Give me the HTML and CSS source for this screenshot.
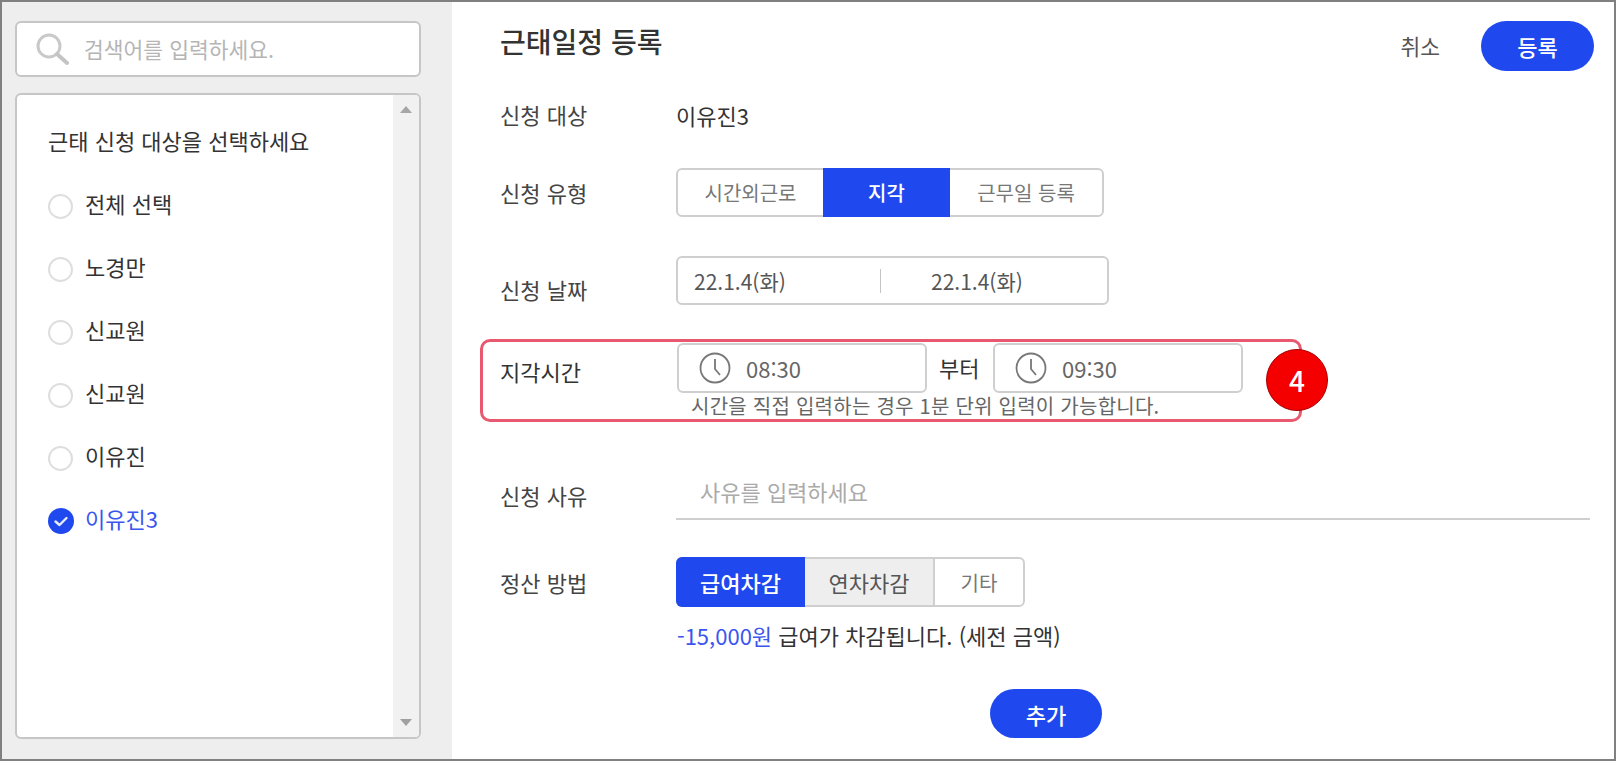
FILE: index.html
```html
<!DOCTYPE html>
<html lang="ko">
<head>
<meta charset="utf-8">
<title>근태일정 등록</title>
<link rel="stylesheet" href="styles.css">
</head>
<body>
<div class="app">
  <aside class="side">
    <div class="search">
      <svg class="search-icon" width="34" height="34" viewBox="0 0 34 34"><circle cx="14" cy="14" r="11" fill="none" stroke="#c9c9c9" stroke-width="3"/><path d="M22 22L32 31" stroke="#c4c4c4" stroke-width="4" stroke-linecap="round"/></svg>
      <span class="placeholder">검색어를 입력하세요.</span>
    </div>
    <div class="list-box">
      <div class="list">
        <div class="list-title">근태 신청 대상을 선택하세요</div>
        <div class="item"><span class="radio"></span><span>전체 선택</span></div>
        <div class="item"><span class="radio"></span><span>노경만</span></div>
        <div class="item"><span class="radio"></span><span>신교원</span></div>
        <div class="item"><span class="radio"></span><span>신교원</span></div>
        <div class="item"><span class="radio"></span><span>이유진</span></div>
        <div class="item selected">
          <svg class="check" width="26" height="26" viewBox="0 0 26 26"><circle cx="13" cy="13" r="13" fill="#1f49ee"/><path d="M7.5 13.5L11.5 17L18.5 10" fill="none" stroke="#e8ecff" stroke-width="2.4" stroke-linecap="round" stroke-linejoin="round"/></svg>
          <span>이유진3</span>
        </div>
      </div>
      <div class="scrollbar"><span class="arrow up"></span><span class="arrow down"></span></div>
    </div>
  </aside>
  <main class="main">
    <header class="head">
      <h1 class="title">근태일정 등록</h1>
      <div class="actions">
        <span class="cancel">취소</span>
        <button class="pill">등록</button>
      </div>
    </header>
    <div class="row row-target"><div class="label">신청 대상</div><div class="value">이유진3</div></div>
    <div class="row row-type">
      <div class="label">신청 유형</div>
      <div class="seg">
        <span class="seg-item w-a">시간외근로</span>
        <span class="seg-item on w-b">지각</span>
        <span class="seg-item w-c">근무일 등록</span>
      </div>
    </div>
    <div class="row row-date">
      <div class="label label-low">신청 날짜</div>
      <div class="date">
        <span class="date-a">22.1.4(화)</span>
        <span class="date-sep"></span>
        <span class="date-b">22.1.4(화)</span>
      </div>
    </div>
    <section class="late">
      <div class="late-row">
        <div class="label late-label">지각시간</div>
        <div class="time">
          <svg width="32" height="32" viewBox="0 0 32 32"><circle cx="16" cy="16" r="14.5" fill="none" stroke="#777" stroke-width="1.8"/><path d="M16 7V17L21 23" fill="none" stroke="#777" stroke-width="1.8"/></svg>
          <span>08:30</span>
        </div>
        <span class="from">부터</span>
        <div class="time">
          <svg width="32" height="32" viewBox="0 0 32 32"><circle cx="16" cy="16" r="14.5" fill="none" stroke="#777" stroke-width="1.8"/><path d="M16 7V17L21 23" fill="none" stroke="#777" stroke-width="1.8"/></svg>
          <span>09:30</span>
        </div>
      </div>
      <p class="help">시간을 직접 입력하는 경우 1분 단위 입력이 가능합니다.</p>
      <span class="badge">4</span>
    </section>
    <div class="row row-reason">
      <div class="label">신청 사유</div>
      <div class="reason">사유를 입력하세요</div>
    </div>
    <div class="row row-pay">
      <div class="label">정산 방법</div>
      <div class="seg seg-pay">
        <span class="seg-item on strong w-d">급여차감</span>
        <span class="seg-item grey w-e">연차차감</span>
        <span class="seg-item w-f">기타</span>
      </div>
    </div>
    <p class="note"><span class="amount">-15,000원</span> 급여가 차감됩니다. (세전 금액)</p>
    <div class="add-wrap"><button class="pill add">추가</button></div>
  </main>
</div>
</body>
</html>
```

FILE: styles.css
```css
* { box-sizing: border-box; }
html, body { margin: 0; padding: 0; }
body {
  width: 1616px;
  height: 761px;
  overflow: hidden;
  background: #fff;
  font-family: "Noto Sans CJK KR", "Noto Sans", sans-serif;
  font-size: 22px;
  color: #333;
}
.app {
  display: flex;
  width: 1616px;
  height: 761px;
  border: 2px solid #808080;
}
.side {
  width: 450px;
  flex: none;
  background: #eeeeee;
  padding: 19px 31px 19px 13px;
  display: flex;
  flex-direction: column;
}
.search {
  height: 56px;
  background: #fff;
  border: 2px solid #c6c6c6;
  border-radius: 6px;
  display: flex;
  align-items: center;
  padding-left: 18px;
}
.search-icon { flex: none; margin-right: 15px; }
.placeholder { color: #b5b5b5; font-size: 21.5px; margin-top: -1px; }
.list-box {
  margin-top: 16px;
  height: 646px;
  background: #fff;
  border: 2px solid #c6c6c6;
  border-radius: 6px;
  display: flex;
  overflow: hidden;
}
.list { flex: 1; padding: 27px 0 0 31px; }
.list-title { height: 36px; line-height: 36px; font-size: 22px; color: #333; margin-bottom: 35px; }
.item {
  display: flex;
  align-items: center;
  height: 26px;
  margin-bottom: 37px;
  gap: 12px;
  color: #333;
  line-height: 26px;
}
.item span:last-child { position: relative; top: -3px; }
.radio {
  width: 25px;
  height: 25px;
  flex: none;
  border: 2px solid #dedede;
  border-radius: 50%;
  background: #fff;
}
.check { flex: none; margin-right: -1px; }
.selected { color: #3b56ee; }
.scrollbar {
  width: 26px;
  flex: none;
  background: #f1f1f1;
  display: flex;
  flex-direction: column;
  justify-content: space-between;
  align-items: center;
  padding: 11px 0 11px;
}
.arrow { width: 0; height: 0; border-left: 6px solid transparent; border-right: 6px solid transparent; }
.arrow.up { border-bottom: 7px solid #a6a6a6; }
.arrow.down { border-top: 7px solid #a0a0a0; }

.main { flex: 1; padding: 19px 24px 0 48px; min-width: 0; }
.head {
  display: flex;
  justify-content: space-between;
  align-items: center;
  height: 49px;
  margin-bottom: 31px;
}
.title {
  margin: -9px 0 0;
  font-size: 28px;
  font-weight: 500;
  color: #333;
  line-height: 40px;
}
.actions { display: flex; align-items: center; gap: 41px; margin-right: -4px; }
.cancel { font-size: 21.5px; color: #555; }
.pill {
  width: 113px;
  height: 50px;
  border: 0;
  border-radius: 25px;
  background: #1f49ee;
  color: #fff;
  font-family: inherit;
  font-size: 22px;
  font-weight: 500;
  padding: 0;
}
.row { display: flex; }
.label { width: 176px; flex: none; color: #444; font-size: 22px; line-height: 30px; }
.value { color: #333; margin-top: -2px; }
.row-target { height: 30px; align-items: center; margin-bottom: 37px; }
.row-target .label { margin-top: -4px; }
.row-type { height: 49px; align-items: center; margin-bottom: 39px; }
.row-type .label { margin-top: -1px; }
.row-date { height: 49px; margin-bottom: 34px; }
.label-low { margin-top: 18px; }
.seg {
  display: flex;
  height: 49px;
  border: 2px solid #cfcfcf;
  border-radius: 6px;
  background: #fff;
}
.seg-pay { height: 50px; }
.seg-item {
  display: flex;
  align-items: center;
  justify-content: center;
  font-size: 20px;
  color: #777;
}
.w-a { width: 145px; }
.w-b { width: 127px; }
.w-c { width: 152px; }
.w-d { width: 129px; }
.w-e { width: 130px; border-right: 2px solid #cfcfcf; }
.w-f { width: 88px; }
.seg-item.on { background: #1f49ee; color: #fff; font-weight: 500; margin: -2px 0; }
.seg-item.strong { font-size: 22px; margin: -2px 0 -2px -2px; border-radius: 6px 0 0 6px; }
.seg-item.grey { background: #eeeeee; color: #555; font-size: 22px; }
.date {
  width: 433px;
  height: 49px;
  border: 2px solid #cfcfcf;
  border-radius: 6px;
  display: flex;
  align-items: center;
  padding-left: 16px;
  font-size: 21px;
  color: #555;
}
.date-a { width: 186px; }
.date-sep { width: 1px; height: 24px; background: #c4c4c4; }
.date-b { margin-left: 50px; }
.late {
  position: relative;
  width: 822px;
  height: 83px;
  margin: 0 0 50px -20px;
  border: 3px solid #e8596f;
  border-radius: 10px;
  padding: 1px 0 0 17px;
}
.late-row { display: flex; align-items: center; height: 50px; }
.late-label { width: 177px; margin-top: 5px; color: #333; }
.time {
  width: 250px;
  height: 50px;
  border: 2px solid #cfcfcf;
  border-radius: 6px;
  display: flex;
  align-items: center;
  padding-left: 20px;
  gap: 15px;
  color: #666;
}
.from { width: 66px; padding-left: 12px; color: #333; margin-top: -2px; }
.help {
  margin: 0 0 0 191px;
  position: relative;
  top: -2px;
  font-size: 20px;
  line-height: 30px;
  letter-spacing: 0.25px;
  color: #666;
  white-space: nowrap;
}
.badge {
  position: absolute;
  left: 783px;
  top: 7px;
  width: 62px;
  height: 62px;
  border-radius: 50%;
  background: #f40000;
  border: 1px solid #a80000;
  color: #fff;
  font-size: 28px;
  font-weight: 500;
  display: flex;
  align-items: center;
  justify-content: center;
}
.row-reason { height: 48px; margin-bottom: 37px; }
.row-reason .label { margin-top: 8px; }
.reason {
  flex: 1;
  border-bottom: 2px solid #cfcfcf;
  padding-left: 24px;
  color: #aaa;
  line-height: 38px;
  height: 48px;
}
.row-pay { height: 50px; align-items: center; margin-bottom: 13px; }
.row-pay .label { margin-top: 0; }
.note { margin: 0; height: 30px; line-height: 30px; padding-left: 177px; color: #333; white-space: nowrap; }
.amount { color: #3b56ee; }
.add-wrap { margin: 39px 0 0 490px; }
.add { width: 112px; height: 49px; }
```
